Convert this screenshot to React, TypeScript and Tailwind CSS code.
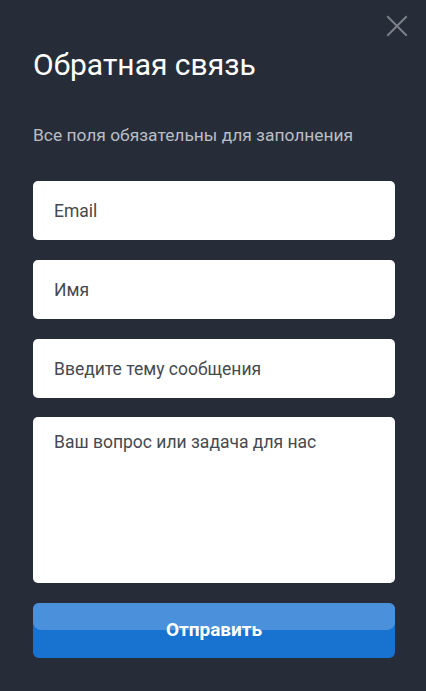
import React from "react";

const fieldClass =
  "w-full h-[59px] rounded-[5px] bg-white px-[21px] text-[17.5px] text-[#3c3f45] placeholder:text-[#46494f] outline-none";

const Feedback = () => {
  return (
    <div className="min-h-[691px] w-full bg-[#262d38] font-['Roboto',sans-serif] relative">
      <button className="absolute right-[18px] top-[15px] w-[22px] h-[22px] flex items-center justify-center">
        <svg width="22" height="22" viewBox="0 0 22 22" fill="none">
          <path d="M2 2 L20 20 M20 2 L2 20" stroke="#7b8089" strokeWidth="2" strokeLinecap="square" />
        </svg>
      </button>

      <div className="pl-[33px] pr-[31px] pt-[47px]">
        <h2 className="text-[30px] leading-[36px] text-white font-normal">Обратная связь</h2>
        <p className="mt-[40px] text-[17.4px] leading-[24px] text-[#b9bdc5]">
          Все поля обязательны для заполнения
        </p>

        <form className="mt-[34px] flex flex-col">
          <input className={fieldClass} placeholder="Email" />
          <input className={`${fieldClass} mt-[20px]`} placeholder="Имя" />
          <input className={`${fieldClass} mt-[20px]`} placeholder="Введите тему сообщения" />
          <textarea
            className="mt-[19px] w-full h-[166px] resize-none rounded-[5px] bg-white px-[21px] pt-[12px] text-[17.5px] leading-[26px] text-[#3c3f45] placeholder:text-[#46494f] outline-none"
            placeholder="Ваш вопрос или задача для нас"
          />
          <button
            type="button"
            className="mt-[20px] relative h-[55px] w-full rounded-[6px] bg-[#1872d0] overflow-hidden"
          >
            <span className="absolute left-0 right-0 top-0 h-[27px] rounded-b-[8px] bg-[#4a90db]" />
            <span className="relative text-[19px] font-bold text-white">Отправить</span>
          </button>
        </form>
      </div>
    </div>
  );
};

export default function App() {
  return <Feedback />;
}
